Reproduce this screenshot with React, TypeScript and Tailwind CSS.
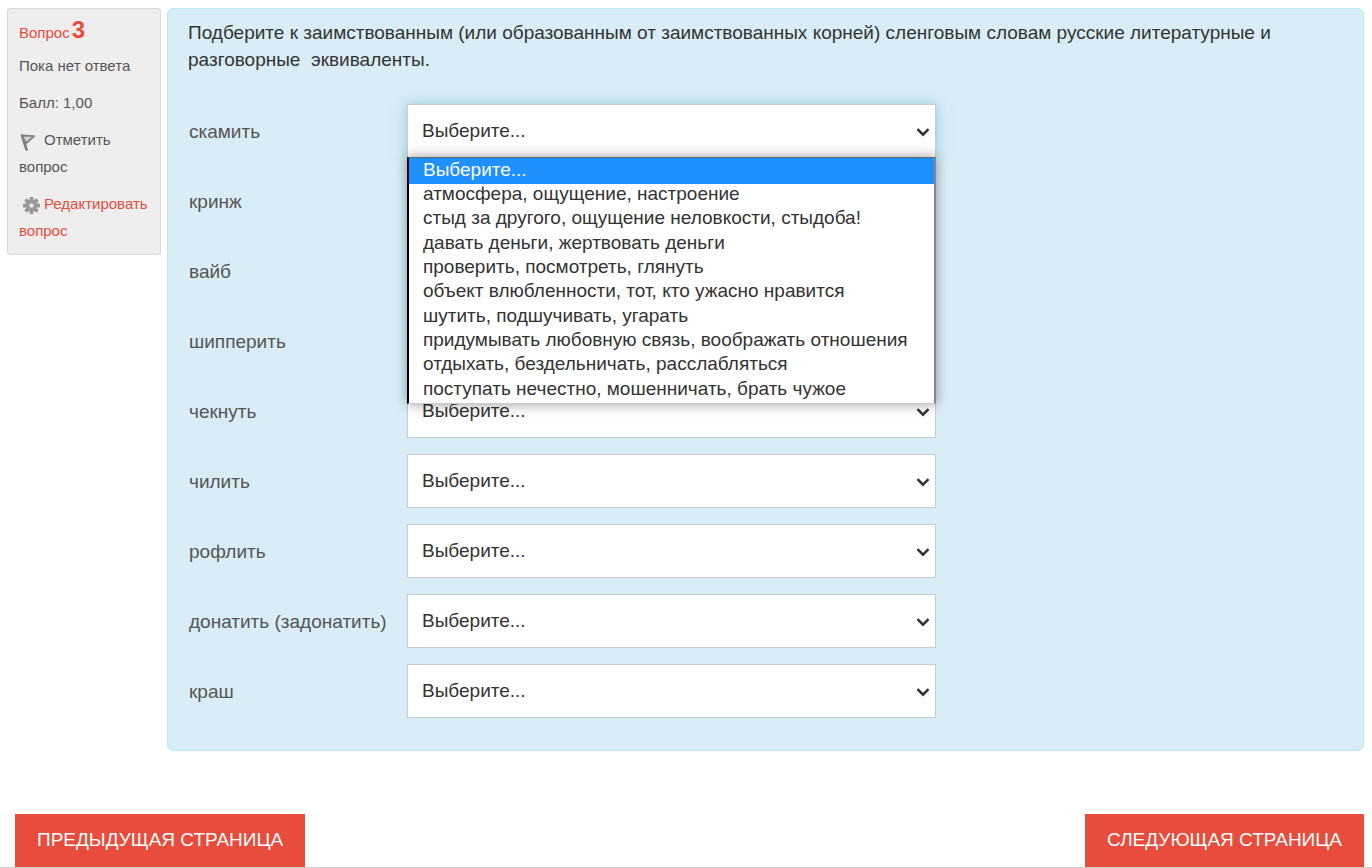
const words: string[] = [
  'скамить',
  'кринж',
  'вайб',
  'шипперить',
  'чекнуть',
  'чилить',
  'рофлить',
  'донатить (задонатить)',
  'краш',
];

const answers: string[] = [
  'атмосфера, ощущение, настроение',
  'стыд за другого, ощущение неловкости, стыдоба!',
  'давать деньги, жертвовать деньги',
  'проверить, посмотреть, глянуть',
  'объект влюбленности, тот, кто ужасно нравится',
  'шутить, подшучивать, угарать',
  'придумывать любовную связь, воображать отношения',
  'отдыхать, бездельничать, расслабляться',
  'поступать нечестно, мошенничать, брать чужое',
];

function FlagIcon() {
  return (
    <svg className="mr-2 inline-block align-middle" width="17" height="20" viewBox="0 0 17 20" fill="none" aria-hidden="true">
      <path d="M3 4.500 7.500 18.500" stroke="#7d7d7d" strokeWidth="2.600" strokeLinecap="round" />
      <path d="M3 4.500 15 5.200 7 12.200Z" fill="#d2d2d2" stroke="#858585" strokeWidth="1.800" strokeLinejoin="round" />
    </svg>
  );
}

function GearIcon() {
  return (
    <svg className="mr-1 ml-1 inline-block align-middle" width="17" height="17" viewBox="0 0 16 16" aria-hidden="true">
      <g fill="#999">
        <rect x="6.200" y="0" width="3.600" height="16" rx=".8" />
        <rect x="6.200" y="0" width="3.600" height="16" rx=".8" transform="rotate(45 8 8)" />
        <rect x="6.200" y="0" width="3.600" height="16" rx=".8" transform="rotate(90 8 8)" />
        <rect x="6.200" y="0" width="3.600" height="16" rx=".8" transform="rotate(135 8 8)" />
        <circle cx="8" cy="8" r="5.800" />
      </g>
      <circle cx="8" cy="8" r="2" fill="#eee" />
    </svg>
  );
}

function OptionList() {
  return (
    <ul
      role="listbox"
      aria-label="Варианты ответа"
      className="absolute inset-x-0 top-[53px] z-10 flex h-[247px] flex-col border-t border-r-2 border-b border-l-2 border-t-[#666] border-r-[#888] border-b-[#ccc] border-l-black bg-white text-[19px] leading-5 text-[#333] shadow-[0_0_12px_rgba(0,0,0,0.4)]"
    >
      <li role="option" aria-selected="true" className="h-[26px] shrink-0 bg-[#1e90ff] pt-0.5 pl-3.5 text-white">
        Выберите...
      </li>
      {answers.map((answer) => (
        <li key={answer} role="option" aria-selected="false" className="min-h-0 flex-1 pl-3.5 whitespace-nowrap">
          {answer}
        </li>
      ))}
    </ul>
  );
}

function AnswerSelect({ id, open }: { id: string; open: boolean }) {
  return (
    <div className="relative">
      <select
        id={id}
        defaultValue=""
        className={
          open
            ? 'block h-[54px] w-full appearance-none border border-[#ccc] bg-white px-3.5 text-[19px] text-[#333] shadow-[0_0_12px_rgba(82,168,204,0.5)] outline-none'
            : 'block h-[54px] w-full appearance-none border border-[#ccc] bg-white px-3.5 text-[19px] text-[#333]'
        }
      >
        <option value="">Выберите...</option>
        {answers.map((answer) => (
          <option key={answer}>{answer}</option>
        ))}
      </select>
      <svg className="pointer-events-none absolute top-6 right-1.5" width="14" height="9" viewBox="0 0 14 9" fill="none" aria-hidden="true">
        <path d="M1.500 1.200 7 6.700l5.500-5.500" stroke="#333" strokeWidth="2.500" />
      </svg>
      {open && <OptionList />}
    </div>
  );
}

export default function App() {
  return (
    <div className="bg-white font-['Liberation_Sans',Arial,sans-serif] text-[#333]">
      <main className="flex items-start gap-1.5 pt-2 pr-2 pl-[7px]">
        <aside className="w-[154px] shrink-0 rounded-[3px] border border-[#d9d9d9] bg-[#eee] pt-[7px] pr-2 pb-2.5 pl-[11px] text-[15px] leading-[27px] text-[#555]">
          <h3 className="text-[#e74c3c]">
            Вопрос <b className="-ml-0.5 text-[24px]">3</b>
          </h3>
          <p className="mt-1.5">Пока нет ответа</p>
          <p className="mt-2.5">Балл: 1,00</p>
          <a href="#flag" className="mt-2.5 block">
            <FlagIcon />
            Отметить вопрос
          </a>
          <a href="#edit" className="mt-2.5 block text-[#e74c3c]">
            <GearIcon />
            Редактировать вопрос
          </a>
        </aside>
        <section className="min-w-0 flex-1 rounded-md border border-[#bce8f1] bg-[#d9edf6] px-5 pt-2.5 pb-6">
          <p className="text-[19px] leading-[27px]">
            Подберите к заимствованным (или образованным от заимствованных корней) сленговым словам русские литературные и
            разговорные&nbsp; эквиваленты.
          </p>
          <table className="mt-[23px] text-[19px] text-[#555]">
            <tbody>
              {words.map((word, i) => (
                <tr key={word} className="h-[70px]">
                  <td className="w-[219px] p-0 pt-0.5 pl-px">
                    <label htmlFor={`answer-${i}`}>{word}</label>
                  </td>
                  <td className="w-[529px] p-0">
                    <AnswerSelect id={`answer-${i}`} open={i === 0} />
                  </td>
                </tr>
              ))}
            </tbody>
          </table>
        </section>
      </main>
      <footer className="mt-[63px] flex justify-between border-b border-[#ccc] pr-2 pl-[15px] text-[19px] text-white">
        <button type="button" className="h-[53px] bg-[#e74c3c] px-[22px]">ПРЕДЫДУЩАЯ СТРАНИЦА</button>
        <button type="button" className="h-[53px] bg-[#e74c3c] px-[22px]">СЛЕДУЮЩАЯ СТРАНИЦА</button>
      </footer>
    </div>
  );
}
